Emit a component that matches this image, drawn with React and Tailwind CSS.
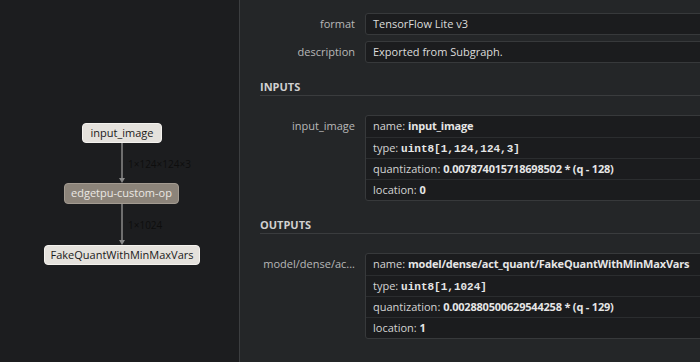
import React from "react";

const font = { fontFamily: '"Open Sans", "Noto Sans", sans-serif' };

const Row = ({ label, title, children }) => (
  <div className="flex items-start">
    <div
      title={title}
      className="w-[125px] shrink-0 truncate pl-[22px] pr-[10px] pt-[2px] text-right text-[11px] leading-[17px] text-[#b8b8b8]"
    >
      {label}
    </div>
    <div className="min-w-0 flex-1">{children}</div>
  </div>
);

const Box = ({ children }) => (
  <div className="h-[22px] rounded-[3px] border border-[#37393b] bg-[#1b1c1e] px-[7px] text-[11px] leading-[20px] text-[#dcdcdc]">
    {children}
  </div>
);

const Detail = ({ items }) => (
  <div className="rounded-[3px] border border-[#37393b] bg-[#1b1c1e] text-[11px] text-[#d4d4d4]">
    {items.map((it, i) => (
      <div
        key={i}
        className={`h-[21px] whitespace-nowrap px-[7px] leading-[20px] ${i > 0 ? "border-t border-[#2b2d2f]" : ""}`}
      >
        {it.k}: {it.v}
      </div>
    ))}
  </div>
);

const Mono = ({ children }) => (
  <b className="text-[11px] text-[#e6e6e6]" style={{ fontFamily: '"Liberation Mono", monospace' }}>
    {children}
  </b>
);

const B = ({ children }) => <b className="tracking-[-0.2px] text-[#e6e6e6]">{children}</b>;

const Section = ({ title }) => (
  <div className="ml-[20px] h-[17px] border-b border-[#3a3c3e] text-[11px] font-bold leading-[16px] text-[#d0d0d0]">
    {title}
  </div>
);

function Graph() {
  return (
    <div className="relative h-full w-[240px] shrink-0 border-r border-[#3c3e40] bg-[#1c1d1f]">
      <svg className="absolute inset-0" width="239" height="362">
        <line x1="122" y1="143" x2="122" y2="180" stroke="#8a8a8a" strokeWidth="1.5" />
        <path d="M119 178 L122 183 L125 178 Z" fill="#8a8a8a" />
        <line x1="122" y1="204" x2="122" y2="242" stroke="#8a8a8a" strokeWidth="1.5" />
        <path d="M119 240 L122 245 L125 240 Z" fill="#8a8a8a" />
        <text x="128" y="168" fontSize="10" fill="#0e0e0e" fontFamily="Open Sans, sans-serif">1×124×124×3</text>
        <text x="128" y="229" fontSize="10" fill="#0e0e0e" fontFamily="Open Sans, sans-serif">1×1024</text>
      </svg>
      <div className="absolute left-[82px] top-[123px] flex h-[20px] w-[80px] items-center justify-center rounded-[4px] border border-[#f4f2ee] bg-[#e4e1dc] text-[11px] text-[#1a1a1a]">
        input_image
      </div>
      <div className="absolute left-[64px] top-[183px] flex h-[21px] w-[115px] items-center justify-center rounded-[4px] border border-[#a39b91] bg-[#8c847a] text-[11px] text-[#ebe8e4]">
        edgetpu-custom-op
      </div>
      <div className="absolute left-[44px] top-[245px] flex h-[20px] w-[156px] items-center justify-center rounded-[4px] border border-[#f4f2ee] bg-[#e4e1dc] text-[11px] text-[#1a1a1a]">
        FakeQuantWithMinMaxVars
      </div>
    </div>
  );
}

export default function App() {
  return (
    <div className="flex h-[362px] w-[700px] overflow-hidden bg-[#242628]" style={font}>
      <Graph />
      <div className="flex-1 overflow-hidden">
        <div className="w-[560px] pt-[13px]">
          <div className="flex flex-col gap-[6px]">
            <Row label="format"><Box>TensorFlow Lite v3</Box></Row>
            <Row label="description"><Box>Exported from Subgraph.</Box></Row>
          </div>
          <div className="mt-[16px]"><Section title="INPUTS" /></div>
          <div className="mt-[19px]">
            <Row label="input_image">
              <Detail
                items={[
                  { k: "name", v: <B>input_image</B> },
                  { k: "type", v: <Mono>uint8[1,124,124,3]</Mono> },
                  { k: "quantization", v: <B>0.007874015718698502 * (q - 128)</B> },
                  { k: "location", v: <B>0</B> },
                ]}
              />
            </Row>
          </div>
          <div className="mt-[16px]"><Section title="OUTPUTS" /></div>
          <div className="mt-[19px]">
            <Row label="model/dense/ac..." title="model/dense/act_quant/FakeQuantWithMinMaxVars">
              <Detail
                items={[
                  { k: "name", v: <B>model/dense/act_quant/FakeQuantWithMinMaxVars</B> },
                  { k: "type", v: <Mono>uint8[1,1024]</Mono> },
                  { k: "quantization", v: <B>0.002880500629544258 * (q - 129)</B> },
                  { k: "location", v: <B>1</B> },
                ]}
              />
            </Row>
          </div>
        </div>
      </div>
    </div>
  );
}
